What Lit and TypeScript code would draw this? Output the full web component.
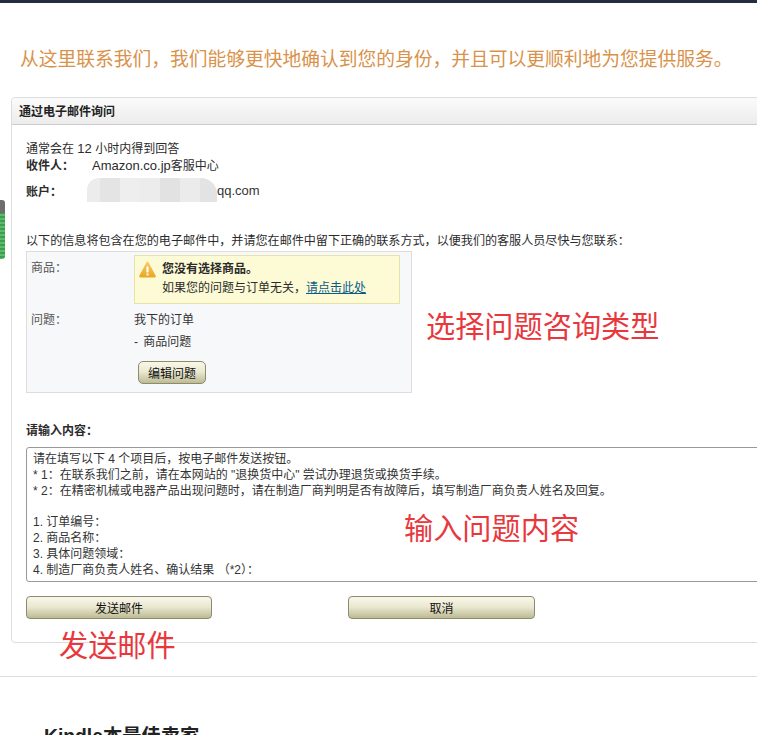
import { LitElement, html, css } from "lit";
import { customElement } from "lit/decorators.js";

const BLOCKS = [
  { c: "#ececec", w: 13 },
  { c: "#e4e4e4", w: 20 },
  { c: "#eeeeee", w: 20 },
  { c: "#ececec", w: 20 },
  { c: "#e2e2e2", w: 20 },
  { c: "#ebebeb", w: 20 },
  { c: "#e3e3e3", w: 17 },
];

@customElement("app-root")
export class AppRoot extends LitElement {
  static styles = css`
    :host {
      display: block;
      width: 757px;
      height: 735px;
      overflow: hidden;
      position: relative;
      background: #fff;
      font-family: "Liberation Sans", "Noto Sans CJK SC", sans-serif;
      font-size: 12px;
      color: #2b2b2b;
      box-sizing: border-box;
    }
    .topbar { height: 3px; background: #232f3e; }
    .lead {
      margin: 0;
      padding: 45px 0 0 20px;
      height: 49px;
      box-sizing: content-box;
      font-size: 18.75px;
      line-height: 24px;
      font-weight: 400;
      color: #d9924a;
      white-space: nowrap;
    }
    .box {
      margin-left: 11px;
      width: 800px;
      height: 546px;
      box-sizing: border-box;
      border: 1px solid #ddd;
      border-radius: 4px;
      background: #fff;
    }
    .box-head {
      height: 27px;
      box-sizing: border-box;
      padding: 0 0 0 7px;
      font-size: 12px;
      font-weight: 700;
      line-height: 28px;
      color: #222;
      background: linear-gradient(#fbfbfb, #ececec);
      border-bottom: 1px solid #ccc;
      border-radius: 4px 4px 0 0;
    }
    .box-body { padding: 15px 0 0 14px; }
    .line { height: 17px; line-height: 17px; white-space: nowrap; }
    .lat { font-size: 13px; }
    .rcpt { display: flex; height: 17px; line-height: 17px; }
    .k { width: 66px; font-weight: 700; flex: none; }
    .rcpt .k { padding-top: 1px; }
    .account { display: flex; align-items: center; height: 24px; margin-top: 4px; }
    .blur {
      display: flex;
      height: 24px;
      margin-left: -5px;
      border-radius: 12px 16px 0 0;
      overflow: hidden;
      flex: none;
    }
    .blur i { display: block; height: 100%; }
    .mail { color: #333; font-size: 13px; }
    .note { margin: 31px 0 0; height: 17px; font-size: 12.08px; line-height: 17px; white-space: nowrap; }
    .panel {
      margin-top: 1px;
      width: 386px;
      height: 142px;
      box-sizing: border-box;
      border: 1px solid #ddd;
      background: #f7f8fa;
      padding: 3px 11px 0 4px;
    }
    .row { display: flex; }
    .lab { width: 103px; flex: none; color: #555; font-size: 12px; line-height: 20px; padding-top: 3px; box-sizing: border-box; }
    .q .lab { padding-top: 1px; }
    .warn {
      width: 266px;
      height: 49px;
      box-sizing: border-box;
      background: #fdfbd5;
      border: 1px solid #e8e2a8;
      display: flex;
      padding: 4px 0 0 4px;
      gap: 6px;
      line-height: 19px;
    }
    .warn svg { flex: none; margin-top: 1px; }
    .warn b { display: block; }
    .warn a { color: #0a5a8a; text-decoration: underline; }
    .q { margin-top: 5px; }
    .qv { line-height: 22px; color: #333; }
    .dash { word-spacing: 2px; }
    .btn {
      font: inherit;
      color: #111;
      border: 1px solid #8d8a6d;
      border-radius: 4px;
      background: linear-gradient(#f9f7e8 0%, #ebe9d2 45%, #bdbb95 100%);
      padding: 0;
      text-align: center;
    }
    .edit { display: block; margin: 8px 0 0 4px; width: 68px; height: 23px; border-radius: 5px; }
    .in-title { margin-top: 30px; height: 17px; line-height: 17px; font-weight: 700; }
    .ta {
      margin-top: 7px;
      width: 760px;
      height: 135px;
      box-sizing: border-box;
      border: 1px solid #999;
      border-radius: 3px;
      padding: 4px 6px;
      line-height: 15.8px;
      color: #333;
      white-space: pre;
    }
    .actions { display: flex; margin-top: 14px; gap: 136px; }
    .actions .btn { width: 187px; height: 23px; }
    .actions .btn:first-child { width: 186px; }
    .anno {
      position: absolute;
      color: #e8383d;
      font-size: 29.2px;
      line-height: 36px;
      white-space: nowrap;
    }
    .a1 { left: 426px; top: 309px; }
    .a2 { left: 404px; top: 511px; }
    .a3 { left: 59px; top: 628px; }
    .tab {
      position: absolute;
      left: 0;
      top: 200px;
      width: 5px;
      height: 59px;
      background:
        linear-gradient(#6d6d6d, #6d6d6d) top / 100% 13px no-repeat,
        repeating-linear-gradient(#3a9f4c 0 2px, #5cb96d 2px 4px);
      border-radius: 0 3px 3px 0;
    }
    .rule { margin-top: 33px; border-top: 1px solid #ddd; }
    .best { margin: 49px 0 0 44px; font-size: 19.3px; line-height: 22px; font-weight: 700; color: #222; white-space: nowrap; }
  `;

  render() {
    return html`
      <div class="topbar"></div>
      <h1 class="lead">从这里联系我们&#xFF0C;我们能够更快地确认到您的身份&#xFF0C;并且可以更顺利地为您提供服务&#x3002;</h1>
      <section class="box">
        <div class="box-head">通过电子邮件询问</div>
        <div class="box-body">
          <div class="line">通常会在 <span class="lat">12</span> 小时内得到回答</div>
          <div class="rcpt"><span class="k">收件人&#xFF1A;</span><span><span class="lat">Amazon.co.jp</span>客服中心</span></div>
          <div class="account">
            <span class="k">账户&#xFF1A;</span>
            <span class="blur">${BLOCKS.map((b) => html`<i style="background:${b.c};width:${b.w}px"></i>`)}</span>
            <span class="mail">qq.com</span>
          </div>
          <p class="note">以下的信息将包含在您的电子邮件中&#xFF0C;并请您在邮件中留下正确的联系方式&#xFF0C;以便我们的客服人员尽快与您联系&#xFF1A;</p>
          <div class="panel">
            <div class="row">
              <span class="lab">商品&#xFF1A;</span>
              <div class="warn">
                <svg width="17" height="17" viewBox="0 0 17 17">
                  <defs>
                    <linearGradient id="wg" x1="0" y1="0" x2="0" y2="1">
                      <stop offset="0" stop-color="#f6cf6a"></stop>
                      <stop offset="1" stop-color="#eaa520"></stop>
                    </linearGradient>
                  </defs>
                  <path d="M8.5.5c.5 0 .8.3 1 .7l7.2 13.6c.4.8-.1 1.7-1 1.7H1.3c-.9 0-1.4-.9-1-1.7L7.5 1.2c.2-.4.5-.7 1-.7Z" fill="url(#wg)"></path>
                  <rect x="7.5" y="5.5" width="2" height="6" fill="#fff"></rect>
                  <rect x="7.5" y="12.5" width="2" height="2" fill="#fff"></rect>
                </svg>
                <div><b>您没有选择商品&#x3002;</b>如果您的问题与订单无关&#xFF0C;<a href="#">请点击此处</a></div>
              </div>
            </div>
            <div class="row q">
              <span class="lab">问题&#xFF1A;</span>
              <div>
                <div class="qv">我下的订单</div>
                <div class="qv dash">- 商品问题</div>
                <button class="btn edit">编辑问题</button>
              </div>
            </div>
          </div>
          <div class="in-title">请输入内容&#xFF1A;</div>
          <div class="ta">请在填写以下 4 个项目后&#xFF0C;按电子邮件发送按钮&#x3002;
* 1&#xFF1A;在联系我们之前&#xFF0C;请在本网站的 "退换货中心" 尝试办理退货或换货手续&#x3002;
* 2&#xFF1A;在精密机械或电器产品出现问题时&#xFF0C;请在制造厂商判明是否有故障后&#xFF0C;填写制造厂商负责人姓名及回复&#x3002;

1. 订单编号&#xFF1A;
2. 商品名称&#xFF1A;
3. 具体问题领域&#xFF1A;
4. 制造厂商负责人姓名、确认结果 &#xFF08;*2&#xFF09;&#xFF1A;</div>
          <div class="actions">
            <button class="btn">发送邮件</button>
            <button class="btn">取消</button>
          </div>
        </div>
      </section>
      <div class="rule"></div>
      <div class="best">Kindle本最佳卖家</div>
      <div class="tab"></div>
      <div class="anno a1">选择问题咨询类型</div>
      <div class="anno a2">输入问题内容</div>
      <div class="anno a3">发送邮件</div>
    `;
  }
}
